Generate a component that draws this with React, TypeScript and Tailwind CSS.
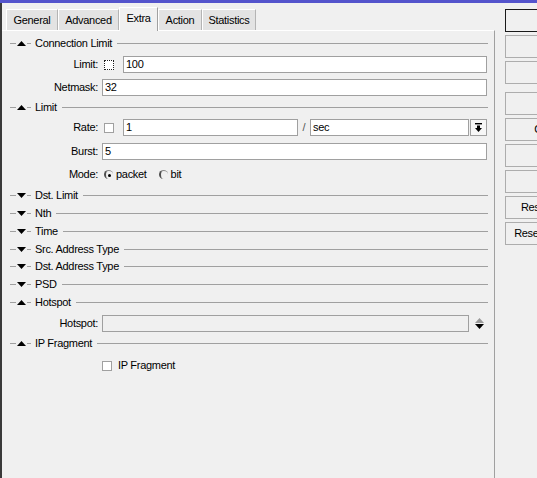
import React from 'react'

const line = 'bg-[#a0a0a0]'

function Tri({ up, className = '' }: { up?: boolean; className?: string }) {
  return (
    <svg width="9" height="5" viewBox="0 0 9 5" className={`shrink-0 ${className}`}>
      <polygon points={up ? '0,5 9,5 4.5,0' : '0,0 9,0 4.5,5'} fill="#000" />
    </svg>
  )
}

function Section({ title, open, className = '' }: { title: string; open?: boolean; className?: string }) {
  return (
    <div className={`flex items-center pl-[8px] pr-[6px] ${className}`}>
      <div className={`w-[6px] h-px ${line}`} />
      <Tri up={open} className="ml-[1px]" />
      <div className={`ml-[1px] w-[4px] h-px ${line}`} />
      <span className="ml-[4px] whitespace-nowrap">{title}</span>
      <div className={`ml-[5px] flex-1 h-px ${line}`} />
    </div>
  )
}

function Field({
  label,
  className = '',
  children,
}: {
  label: string
  className?: string
  children: React.ReactNode
}) {
  return (
    <div className={`flex items-center h-[17px] pr-[7px] ${className}`}>
      <span className="w-[96px] shrink-0 text-right whitespace-nowrap">{label}</span>
      <div className="ml-[4px] flex-1 flex items-center h-full">{children}</div>
    </div>
  )
}

function Box({ value = '', className = '', disabled }: { value?: string; className?: string; disabled?: boolean }) {
  return (
    <div
      className={`h-full border border-[#a0a0a0] pl-[2px] flex items-center ${
        disabled ? 'bg-[#f0f0f0]' : 'bg-white'
      } ${className}`}
    >
      {value}
    </div>
  )
}

function Check({ className = '', focus }: { className?: string; focus?: boolean }) {
  return (
    <span
      className={`block w-[10px] h-[10px] shrink-0 bg-white border ${
        focus ? 'border-dotted border-[#202020]' : 'border-[#a0a0a0]'
      } ${className}`}
    />
  )
}

function Radio({ checked, className = '' }: { checked?: boolean; className?: string }) {
  return (
    <span
      className={`flex w-[9px] h-[9px] shrink-0 items-center justify-center rounded-full border-l-2 border-t border-l-[#505050] border-t-[#8a8a8a] ${className}`}
    >
      {checked && <span className="block w-[3px] h-[3px] rounded-full bg-black" />}
    </span>
  )
}

const tabs = [
  { name: 'General', w: 'w-[52px]' },
  { name: 'Advanced', w: 'w-[61px]' },
  { name: 'Extra', w: 'w-[39px]', active: true },
  { name: 'Action', w: 'w-[44px]' },
  { name: 'Statistics', w: 'w-[54px]' },
]

const buttons = [
  'OK',
  'Cancel',
  'Apply',
  'Disable',
  'Comment',
  'Copy',
  'Remove',
  'Reset Counters',
  'Reset All Counters',
]

export default function App() {
  return (
    <div className="w-[537px] h-[478px] overflow-hidden flex flex-col bg-[#f0f0f0] text-black text-[11px] tracking-[-0.3px] font-['Liberation_Sans',Arial,sans-serif]">
      <div className="h-[3px] shrink-0 bg-[#5454cc]" />

      <div className="flex flex-1 min-h-0">
        <div className="w-[2px] shrink-0 bg-[#3a3a3a]" />

        {/* Tabs + panel */}
        <div className="w-[493px] shrink-0 flex flex-col">
          <div className="h-[27px] shrink-0 flex items-end pl-[4px]">
            {tabs.map((t) =>
              t.active ? (
                <div
                  key={t.name}
                  className={`${t.w} h-[24px] -mb-px relative z-10 flex items-center justify-center pb-[2px] bg-[#f0f0f0] border-t border-l border-white border-r border-r-[#a0a0a0]`}
                >
                  {t.name}
                </div>
              ) : (
                <div
                  key={t.name}
                  className={`${t.w} h-[21px] flex items-center justify-center bg-[#e3e3e3] border-t border-l border-white border-r border-r-[#b4b4b4]`}
                >
                  {t.name}
                </div>
              ),
            )}
          </div>

          <div className="flex-1 flex flex-col border-t border-white border-r border-r-[#a0a0a0]">
            <Section title="Connection Limit" open className="mt-[3px] h-[18px]" />
            <Field label="Limit:" className="mt-[4px]">
              <Check focus className="ml-[2px]" />
              <Box value="100" className="ml-[9px] flex-1" />
            </Field>
            <Field label="Netmask:" className="mt-[6px]">
              <Box value="32" className="flex-1" />
            </Field>

            <Section title="Limit" open className="mt-[2px] h-[18px]" />
            <Field label="Rate:" className="mt-[3px]">
              <Check className="ml-[2px]" />
              <Box value="1" className="ml-[9px] w-[175px]" />
              <span className="w-[12px] text-center text-[#555]">/</span>
              <Box value="sec" className="flex-1" />
              <div className="ml-px w-[17px] h-full bg-[#f7f7f7] border border-[#a0a0a0] flex items-center justify-center">
                <svg width="7" height="9" viewBox="0 0 7 9">
                  <rect x="0" y="0" width="7" height="1.4" fill="#000" />
                  <rect x="2" y="2.5" width="3" height="2.5" fill="#000" />
                  <polygon points="0,5 7,5 3.5,9" fill="#000" />
                </svg>
              </div>
            </Field>
            <Field label="Burst:" className="mt-[7px]">
              <Box value="5" className="flex-1" />
            </Field>
            <Field label="Mode:" className="mt-[6px]">
              <Radio checked className="ml-[2px]" />
              <span className="ml-[3px]">packet</span>
              <Radio className="ml-[12px]" />
              <span className="ml-[3px]">bit</span>
            </Field>

            <Section title="Dst. Limit" className="mt-[3px] h-[18px]" />
            <Section title="Nth" className="h-[18px]" />
            <Section title="Time" className="h-[18px]" />
            <Section title="Src. Address Type" className="h-[18px]" />
            <Section title="Dst. Address Type" className="h-[17px]" />
            <Section title="PSD" className="h-[18px]" />
            <Section title="Hotspot" open className="h-[18px]" />
            <Field label="Hotspot:" className="mt-[4px]">
              <Box disabled className="flex-1" />
              <div className="w-[18px] h-full pl-[6px] flex flex-col justify-center gap-[1px]">
                <svg width="9" height="5" viewBox="0 0 9 5">
                  <polygon points="0,5 9,5 4.5,0" fill="#9a9a9a" />
                </svg>
                <svg width="9" height="5" viewBox="0 0 9 5">
                  <polygon points="0,0 9,0 4.5,5" fill="#000" />
                </svg>
              </div>
            </Field>

            <Section title="IP Fragment" open className="mt-[2px] h-[18px]" />
            <Field label="" className="mt-[5px]">
              <Check />
              <span className="ml-[6px]">IP Fragment</span>
            </Field>
          </div>
        </div>

        {/* Right buttons */}
        <div className="ml-[10px] pt-[6px] flex flex-col shrink-0">
          {buttons.map((b, i) => (
            <div
              key={b}
              className={`w-[104px] h-[23px] shrink-0 flex items-center justify-center whitespace-nowrap bg-[#f0f0f0] border ${
                i === 0 ? 'border-[#1a1a1a]' : 'border-[#adadad]'
              } ${i === 0 ? '' : i === 3 ? 'mt-[8px]' : 'mt-[3px]'}`}
            >
              {b}
            </div>
          ))}
        </div>
      </div>
    </div>
  )
}
